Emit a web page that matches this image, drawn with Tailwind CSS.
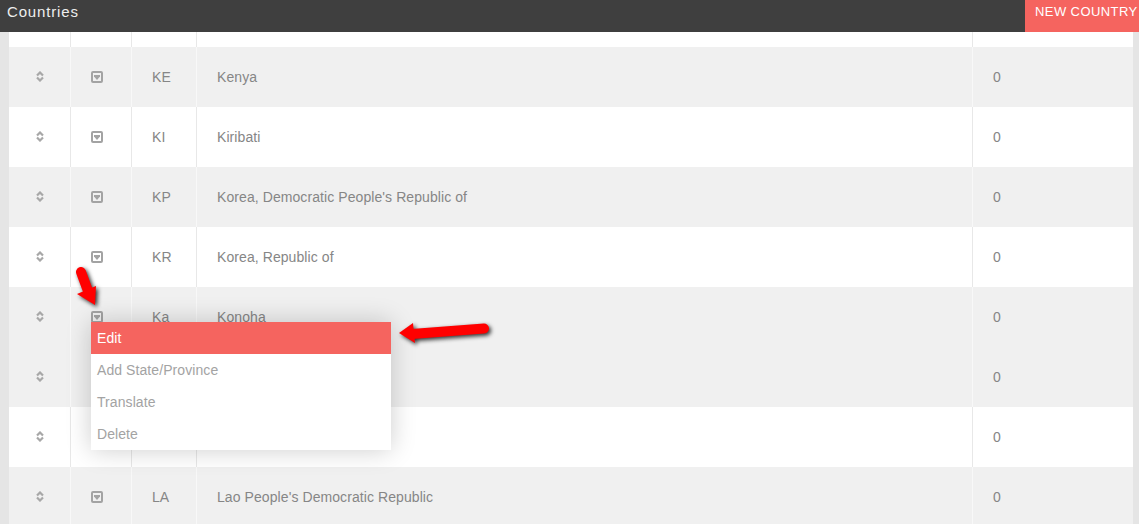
<!DOCTYPE html>
<html lang="en">
<head>
    <meta charset="UTF-8">
    <title>Countries</title>
    <script src="https://cdn.jsdelivr.net/npm/@tailwindcss/browser@4"></script>
</head>
<body class="relative h-screen overflow-hidden bg-[#e5e5e5] font-['Liberation_Sans',Arial,sans-serif] text-[14px] tracking-[0.08px] text-[#868686]">
    <!-- top bar -->
    <header class="h-8 flex items-start justify-between bg-[#3f3f3f]">
        <h1 class="pl-[7px] pt-[3px] text-[15px] leading-[18px] tracking-[0.85px] text-[#eee]">Countries</h1>
        <a class="w-[114px] h-8 pl-[10px] bg-[#f5645f] text-[13px] leading-[24px] tracking-[0.42px] text-white whitespace-nowrap">NEW COUNTRY</a>
    </header>

    <main class="ml-[9px] mr-[6px]">
        <!-- bottom of the row scrolled away -->
        <div class="h-[15px] grid grid-cols-[62px_61px_65px_776px_1fr] bg-white">
            <div class="border-r border-[#e8e8e8]"></div>
            <div class="border-r border-[#e8e8e8]"></div>
            <div class="border-r border-[#e8e8e8]"></div>
            <div class="border-r border-[#e8e8e8]"></div>
            <div></div>
        </div>

        <div class="h-[60px] grid grid-cols-[62px_61px_65px_776px_1fr] bg-[#f0f0f0]">
            <div class="flex items-center justify-center pb-[1px] border-r border-[#f8f8f8]"><svg width="8" height="11" viewBox="0 0 8 11" fill="none" stroke="#a8a8a8" stroke-width="2.2"><path d="M1 4.5 4 1.5 7 4.5M1 6.5 4 9.5 7 6.5"/></svg></div>
            <div class="flex items-center pl-[20px] border-r border-[#f8f8f8]"><svg width="12" height="12" viewBox="0 0 12 12"><rect x="1" y="1" width="10" height="10" rx="1" fill="none" stroke="#a3a3a3" stroke-width="2"/><path d="M3 4h6v1.5L6 9 3 5.5z" fill="#a3a3a3"/></svg></div>
            <div class="flex items-center pl-[20px] border-r border-[#f8f8f8]">KE</div>
            <div class="flex items-center pl-[20px] border-r border-[#f8f8f8]">Kenya</div>
            <div class="flex items-center pl-[20px]">0</div>
        </div>
        <div class="h-[60px] grid grid-cols-[62px_61px_65px_776px_1fr] bg-white">
            <div class="flex items-center justify-center pb-[1px] border-r border-[#e8e8e8]"><svg width="8" height="11" viewBox="0 0 8 11" fill="none" stroke="#a8a8a8" stroke-width="2.2"><path d="M1 4.5 4 1.5 7 4.5M1 6.5 4 9.5 7 6.5"/></svg></div>
            <div class="flex items-center pl-[20px] border-r border-[#e8e8e8]"><svg width="12" height="12" viewBox="0 0 12 12"><rect x="1" y="1" width="10" height="10" rx="1" fill="none" stroke="#a3a3a3" stroke-width="2"/><path d="M3 4h6v1.5L6 9 3 5.5z" fill="#a3a3a3"/></svg></div>
            <div class="flex items-center pl-[20px] border-r border-[#e8e8e8]">KI</div>
            <div class="flex items-center pl-[20px] border-r border-[#e8e8e8]">Kiribati</div>
            <div class="flex items-center pl-[20px]">0</div>
        </div>
        <div class="h-[60px] grid grid-cols-[62px_61px_65px_776px_1fr] bg-[#f0f0f0]">
            <div class="flex items-center justify-center pb-[1px] border-r border-[#f8f8f8]"><svg width="8" height="11" viewBox="0 0 8 11" fill="none" stroke="#a8a8a8" stroke-width="2.2"><path d="M1 4.5 4 1.5 7 4.5M1 6.5 4 9.5 7 6.5"/></svg></div>
            <div class="flex items-center pl-[20px] border-r border-[#f8f8f8]"><svg width="12" height="12" viewBox="0 0 12 12"><rect x="1" y="1" width="10" height="10" rx="1" fill="none" stroke="#a3a3a3" stroke-width="2"/><path d="M3 4h6v1.5L6 9 3 5.5z" fill="#a3a3a3"/></svg></div>
            <div class="flex items-center pl-[20px] border-r border-[#f8f8f8]">KP</div>
            <div class="flex items-center pl-[20px] border-r border-[#f8f8f8]">Korea, Democratic People's Republic of</div>
            <div class="flex items-center pl-[20px]">0</div>
        </div>
        <div class="h-[60px] grid grid-cols-[62px_61px_65px_776px_1fr] bg-white">
            <div class="flex items-center justify-center pb-[1px] border-r border-[#e8e8e8]"><svg width="8" height="11" viewBox="0 0 8 11" fill="none" stroke="#a8a8a8" stroke-width="2.2"><path d="M1 4.5 4 1.5 7 4.5M1 6.5 4 9.5 7 6.5"/></svg></div>
            <div class="flex items-center pl-[20px] border-r border-[#e8e8e8]"><svg width="12" height="12" viewBox="0 0 12 12"><rect x="1" y="1" width="10" height="10" rx="1" fill="none" stroke="#a3a3a3" stroke-width="2"/><path d="M3 4h6v1.5L6 9 3 5.5z" fill="#a3a3a3"/></svg></div>
            <div class="flex items-center pl-[20px] border-r border-[#e8e8e8]">KR</div>
            <div class="flex items-center pl-[20px] border-r border-[#e8e8e8]">Korea, Republic of</div>
            <div class="flex items-center pl-[20px]">0</div>
        </div>
        <div class="relative h-[60px] grid grid-cols-[62px_61px_65px_776px_1fr] bg-[#f0f0f0]">
            <div class="flex items-center justify-center pb-[1px] border-r border-[#f8f8f8]"><svg width="8" height="11" viewBox="0 0 8 11" fill="none" stroke="#a8a8a8" stroke-width="2.2"><path d="M1 4.5 4 1.5 7 4.5M1 6.5 4 9.5 7 6.5"/></svg></div>
            <div class="flex items-center pl-[20px] border-r border-[#f8f8f8]"><svg width="12" height="12" viewBox="0 0 12 12"><rect x="1" y="1" width="10" height="10" rx="1" fill="none" stroke="#a3a3a3" stroke-width="2"/><path d="M3 4h6v1.5L6 9 3 5.5z" fill="#a3a3a3"/></svg></div>
            <div class="flex items-center pl-[20px] border-r border-[#f8f8f8]">Ka</div>
            <div class="flex items-center pl-[20px] border-r border-[#f8f8f8]">Konoha</div>
            <div class="flex items-center pl-[20px]">0</div>

            <!-- row action menu -->
            <ul class="absolute z-10 left-[82px] top-[35px] w-[300px] bg-white shadow-[0_0_24px_rgba(0,0,0,0.2)] text-[#a3a3a3]">
                <li class="h-8 pl-[6px] leading-8 bg-[#f5645f] text-white">Edit</li>
                <li class="h-8 pl-[6px] leading-8">Add State/Province</li>
                <li class="h-8 pl-[6px] leading-8">Translate</li>
                <li class="h-8 pl-[6px] leading-8">Delete</li>
            </ul>
        </div>
        <!-- these two rows sit behind the menu, only the count shows -->
        <div class="h-[60px] grid grid-cols-[62px_61px_65px_776px_1fr] bg-[#f0f0f0]">
            <div class="flex items-center justify-center pb-[1px] border-r border-[#f8f8f8]"><svg width="8" height="11" viewBox="0 0 8 11" fill="none" stroke="#a8a8a8" stroke-width="2.2"><path d="M1 4.5 4 1.5 7 4.5M1 6.5 4 9.5 7 6.5"/></svg></div>
            <div class="border-r border-[#f8f8f8]"></div>
            <div class="border-r border-[#f8f8f8]"></div>
            <div class="border-r border-[#f8f8f8]"></div>
            <div class="flex items-center pl-[20px]">0</div>
        </div>
        <div class="h-[60px] grid grid-cols-[62px_61px_65px_776px_1fr] bg-white">
            <div class="flex items-center justify-center pb-[1px] border-r border-[#e8e8e8]"><svg width="8" height="11" viewBox="0 0 8 11" fill="none" stroke="#a8a8a8" stroke-width="2.2"><path d="M1 4.5 4 1.5 7 4.5M1 6.5 4 9.5 7 6.5"/></svg></div>
            <div class="border-r border-[#e8e8e8]"></div>
            <div class="border-r border-[#e8e8e8]"></div>
            <div class="border-r border-[#e8e8e8]"></div>
            <div class="flex items-center pl-[20px]">0</div>
        </div>
        <div class="h-[60px] grid grid-cols-[62px_61px_65px_776px_1fr] bg-[#f0f0f0]">
            <div class="flex items-center justify-center pb-[1px] border-r border-[#f8f8f8]"><svg width="8" height="11" viewBox="0 0 8 11" fill="none" stroke="#a8a8a8" stroke-width="2.2"><path d="M1 4.5 4 1.5 7 4.5M1 6.5 4 9.5 7 6.5"/></svg></div>
            <div class="flex items-center pl-[20px] border-r border-[#f8f8f8]"><svg width="12" height="12" viewBox="0 0 12 12"><rect x="1" y="1" width="10" height="10" rx="1" fill="none" stroke="#a3a3a3" stroke-width="2"/><path d="M3 4h6v1.5L6 9 3 5.5z" fill="#a3a3a3"/></svg></div>
            <div class="flex items-center pl-[20px] border-r border-[#f8f8f8]">LA</div>
            <div class="flex items-center pl-[20px] border-r border-[#f8f8f8]">Lao People's Democratic Republic</div>
            <div class="flex items-center pl-[20px]">0</div>
        </div>
    </main>

    <!-- annotation arrows drawn over the screenshot -->
    <svg class="absolute z-20 left-0 top-0 pointer-events-none drop-shadow-[2px_2px_2px_rgba(0,0,0,0.8)]" width="1139" height="524">
        <path d="M81 272 88 291" stroke="#f00" stroke-width="10" stroke-linecap="round" fill="none"/>
        <path d="M95 305 77 294 96 286z" fill="#f00"/>
        <path d="M484 328.5 412 334" stroke="#f00" stroke-width="10" stroke-linecap="round" fill="none"/>
        <path d="M399 333 413 323 415 343z" fill="#f00"/>
    </svg>
</body>
</html>
